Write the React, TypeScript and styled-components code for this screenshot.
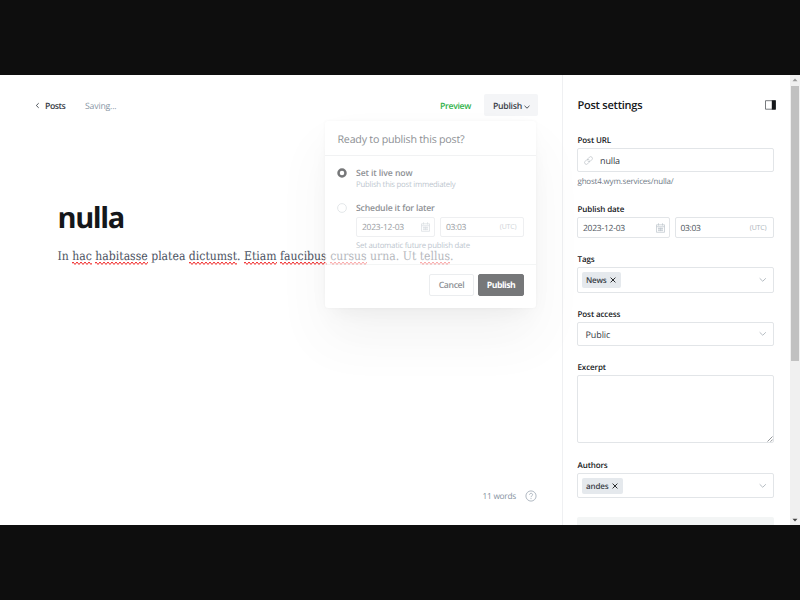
import React from 'react';
import styled, { createGlobalStyle } from 'styled-components';

const Global = createGlobalStyle`
  * { box-sizing: border-box; }
  body {
    margin: 0;
    background: #0e0e0e;
    font-family: "Open Sans", "Noto Sans", sans-serif;
    text-rendering: geometricPrecision;
  }
`;

const Frame = styled.div`
  width: 800px;
  height: 600px;
  padding: 75px 0;
  overflow: hidden;
  background: #0e0e0e;
`;

const Screen = styled.div`
  display: grid;
  grid-template-columns: 562px 228px 10px;
  height: 450px;
  background: #fff;
  overflow: hidden;
`;

const Label = styled.span<{ $size?: number; $weight?: number; $track?: number; $color?: string }>`
  padding-top: 1px;
  font-size: ${p => p.$size ?? 8.7}px;
  font-weight: ${p => p.$weight ?? 400};
  letter-spacing: ${p => p.$track ?? 0}px;
  color: ${p => p.$color ?? '#15171a'};
  white-space: nowrap;
`;

/* Editor column */

const Editor = styled.main`
  position: relative;
  display: flex;
  flex-direction: column;
  height: 450px;
`;

const Toolbar = styled.header`
  display: flex;
  align-items: center;
  height: 22px;
  margin: 19px 24px 0 35px;
`;

const BackLink = styled.div`
  display: flex;
  align-items: center;
  gap: 5px;
  width: 50px;
`;

const ToolbarActions = styled.div`
  display: flex;
  align-items: center;
  gap: 13px;
  margin-left: auto;
`;

const MenuButton = styled.div`
  display: flex;
  align-items: center;
  justify-content: center;
  gap: 2px;
  width: 54px;
  height: 22px;
  padding-left: 1px;
  border-radius: 2px;
  background: #f4f5f7;

  svg { margin-top: 3px; }
`;

const PostTitle = styled.h1`
  margin: 82px 0 0 57.5px;
  font-size: 29px;
  line-height: 40px;
  font-weight: 700;
  letter-spacing: -1.4px;
  color: #15171a;
`;

const PostBody = styled.p`
  margin: 8px 0 0 57.5px;
  font-family: "DejaVu Serif Condensed", "DejaVu Serif", serif;
  font-size: 12.1px;
  line-height: 20px;
  white-space: nowrap;
  color: #4a5160;
`;

const Misspelt = styled.span`
  padding-bottom: 2px;
  background: url("data:image/svg+xml,%3Csvg xmlns='http://www.w3.org/2000/svg' width='4' height='4'%3E%3Cpath d='M-1 3.500 1 1 3 3.500 5 1' fill='none' stroke='%23f02828' stroke-width='1'/%3E%3C/svg%3E")
    left bottom repeat-x;
`;

const StatusBar = styled.footer`
  display: flex;
  align-items: center;
  justify-content: flex-end;
  gap: 9px;
  height: 14px;
  margin: auto 25px 22.5px 0;
`;

/* Publish menu */

const PublishMenu = styled.section`
  position: absolute;
  top: 45.5px;
  left: 325px;
  width: 211px;
  height: 187.5px;
  border-radius: 3px;
  background: #fff;
  opacity: 0.58;
  box-shadow: 0 0 3px rgba(0, 0, 0, 0.06), 0 30px 50px -2px rgba(0, 0, 0, 0.08), 0 8px 20px -8px rgba(0, 0, 0, 0.1);
`;

const MenuHeader = styled.div`
  display: flex;
  align-items: center;
  height: 35.5px;
  padding: 4px 12px 0 12.5px;
  border-bottom: 1px solid #e8eaec;
`;

const MenuBody = styled.div`
  display: flex;
  flex-direction: column;
  gap: 10px;
  height: 108px;
  padding: 10.5px 12px 0;
`;

const Option = styled.div`
  display: grid;
  grid-template-columns: 10px 1fr;
  column-gap: 9px;
  align-items: start;
`;

const OptionText = styled.div`
  display: flex;
  flex-direction: column;
  line-height: 11.5px;
`;

const MenuDates = styled.div`
  display: grid;
  grid-template-columns: 79px 84px;
  gap: 5px;
  margin: 3px 0 3px;
`;

const MenuFooter = styled.div`
  display: flex;
  justify-content: flex-end;
  gap: 4px;
  height: 43px;
  padding: 9px 12px 0 0;
  border-top: 1px solid #eceeef;
`;

const DialogButton = styled.div<{ $primary?: boolean; $width: number }>`
  display: flex;
  align-items: center;
  justify-content: center;
  width: ${p => p.$width}px;
  height: 21.5px;
  border-radius: 2px;
  border: 1px solid ${p => (p.$primary ? '#15171a' : '#dde1e5')};
  background: ${p => (p.$primary ? '#15171a' : '#fff')};
`;

/* Settings column */

const Settings = styled.aside`
  height: 450px;
  overflow: hidden;
  padding: 0 16px 0 14px;
  border-left: 1px solid #eff0f2;
`;

const SettingsHeader = styled.div`
  display: flex;
  align-items: center;
  justify-content: space-between;
  height: 22px;
  margin: 19px -2px 18px 0.5px;
`;

const Field = styled.div<{ $after: number }>`
  display: flex;
  flex-direction: column;
  margin-bottom: ${p => p.$after}px;
`;

const FieldLabel = styled(Label)`
  height: 11px;
  line-height: 11px;
  margin: 0 0 3px 0.5px;
`;

const Box = styled.div<{ $height: number; $pad?: number; $end?: number }>`
  display: flex;
  align-items: center;
  justify-content: space-between;
  height: ${p => p.$height}px;
  padding: 0 ${p => p.$end ?? 6.5}px 0 ${p => p.$pad ?? 5}px;
  border: 1px solid #e2e5e8;
  border-radius: 2px;
`;

const Inline = styled.div<{ $gap: number }>`
  display: flex;
  align-items: center;
  gap: ${p => p.$gap}px;
`;

const Dates = styled.div`
  display: grid;
  grid-template-columns: 93px 1fr;
  gap: 5px;
`;

const Hint = styled(Label)`
  height: 12px;
  line-height: 12px;
  margin: 3px 0 0 0.5px;
`;

const Chip = styled.div`
  display: flex;
  align-items: center;
  gap: 3.500px;
  height: 16px;
  padding: 0 5px 0 4px;
  border-radius: 2px;
  background: #e5e9ed;
`;

const ExcerptBox = styled.div`
  display: flex;
  align-items: flex-end;
  justify-content: flex-end;
  height: 68px;
  padding: 0.5px;
  border: 1px solid #e2e5e8;
  border-radius: 2px;
`;

const NextButton = styled.div`
  height: 30px;
  border-radius: 2px;
  background: #f3f5f5;
`;

/* Scrollbar */

const Scrollbar = styled.div`
  display: flex;
  flex-direction: column;
  justify-content: space-between;
  align-items: center;
  height: 450px;
  background: #f0f0f0;
`;

const Thumb = styled.div`
  width: 8px;
  height: 275px;
  margin-bottom: auto;
  background: #c1c1c1;
`;

const ArrowSlot = styled.div`
  display: flex;
  align-items: center;
  justify-content: center;
  height: 10.5px;
`;

const Chevron = ({ color = '#b0b7be', size = 7.5 }: { color?: string; size?: number }) => (
  <svg width={size} height={size} viewBox="0 0 8 8" fill="none" stroke={color} strokeWidth={size < 7 ? 1.2 : 1}>
    <path d="M.7 2.4 4 5.600 7.300 2.4" />
  </svg>
);

const Cross = () => (
  <svg width="6" height="6" viewBox="0 0 6 6" stroke="#15171a" strokeWidth="0.9">
    <path d="M.6.6 5.4 5.4M5.4.6.6 5.4" />
  </svg>
);

const Radio = ({ on = false }: { on?: boolean }) => (
  <svg width="10" height="11" viewBox="0 0 10 11" fill="#fff">
    {on ? (
      <circle cx="5" cy="6" r="3.500" stroke="#15171a" strokeWidth="2.500" />
    ) : (
      <circle cx="5" cy="6" r="4.400" stroke="#ccd2d7" strokeWidth="0.9" />
    )}
  </svg>
);

const CalendarIcon = () => (
  <svg width="9" height="10" viewBox="0 0 9 10" fill="none" stroke="#bcc4cc" strokeWidth="0.7">
    <path d="M.5 1.8h8v7.5h-8zM.5 3.7h8M2.5.3v2.2M6.5.3v2.2M1.9 5.4h5.2M1.9 7.3h5.2M3 4.6v3.6M4.5 4.6v3.6M6 4.6v3.6" />
  </svg>
);

const LinkIcon = () => (
  <svg width="9" height="9" viewBox="0 0 24 24" fill="none" stroke="#b8bec4" strokeWidth="1.8" strokeLinecap="round">
    <path d="M10 13.5a5 5 0 0 0 7.1.2l4-4a4.6 4.6 0 0 0-6.600-6.600l-4 4a5 5 0 0 0-1 1.500" />
    <path d="M14 10.500a5 5 0 0 0-7.100-.2l-4 4a4.600 4.600 0 0 0 6.600 6.600l4-4a5 5 0 0 0 1-1.500" />
  </svg>
);

const DateValue = () => (
  <>
    <Label $size={8.5} $track={-0.24} $color="#4a5159">2023-12-03</Label>
    <CalendarIcon />
  </>
);

const TimeValue = () => (
  <>
    <Label $size={8.5} $track={-0.3} $color="#4a5159">03:03</Label>
    <Label $size={7} $track={-0.15} $color="#adb4bb">(UTC)</Label>
  </>
);

const fieldText = { $size: 8, $weight: 600, $track: -0.1 };

export default function App() {
  return (
    <Frame>
      <Global />
      <Screen>
        <Editor>
          <Toolbar>
            <BackLink>
              <svg width="5" height="7" viewBox="0 0 5 7" fill="none" stroke="#394047" strokeWidth="0.9">
                <path d="M3.700 1.200 1.300 3.500 3.700 5.800" />
              </svg>
              <Label $weight={600} $track={-0.45} $color="#394047">Posts</Label>
            </BackLink>
            <Label $track={-0.18} $color="#8795a4">Saving...</Label>
            <ToolbarActions>
              <Label $weight={600} $track={-0.33} $color="#30b24a">Preview</Label>
              <MenuButton>
                <Label $weight={600} $track={-0.27} $color="#394047">Publish</Label>
                <Chevron color="#394047" size={6} />
              </MenuButton>
            </ToolbarActions>
          </Toolbar>
          <PostTitle>nulla</PostTitle>
          <PostBody>
            In <Misspelt>hac</Misspelt> <Misspelt>habitasse</Misspelt> platea <Misspelt>dictumst</Misspelt>.{' '}
            <Misspelt>Etiam</Misspelt> <Misspelt>faucibus</Misspelt> <Misspelt>cursus</Misspelt> urna. Ut{' '}
            <Misspelt>tellus</Misspelt>.
          </PostBody>
          <StatusBar>
            <Label $size={8.3} $track={-0.25} $color="#8592a0">11 words</Label>
            <svg width="12" height="12" viewBox="0 0 12 12" fill="none" stroke="#9da7b3" strokeWidth="0.8">
              <circle cx="6" cy="6" r="5.100" />
              <path d="M4.500 4.800c0-2 3.100-2 3.100-.1 0 1.200-1.600 1.100-1.600 2.500M6 8.100v1" />
            </svg>
          </StatusBar>
          <PublishMenu>
            <MenuHeader>
              <Label $size={10.7} $track={-0.23} $color="#394047">Ready to publish this post?</Label>
            </MenuHeader>
            <MenuBody>
              <Option>
                <Radio on />
                <OptionText>
                  <Label $weight={600} $track={-0.12} $color="#394047">Set it live now</Label>
                  <Label $size={7.8} $track={-0.26} $color="#8e9cac">Publish this post immediately</Label>
                </OptionText>
              </Option>
              <Option>
                <Radio />
                <OptionText>
                  <Label $weight={600} $track={-0.18} $color="#394047">Schedule it for later</Label>
                  <MenuDates>
                    <Box $height={20} $end={4}><DateValue /></Box>
                    <Box $height={20}><TimeValue /></Box>
                  </MenuDates>
                  <Label $size={7.8} $track={-0.24} $color="#8e9cac">Set automatic future publish date</Label>
                </OptionText>
              </Option>
            </MenuBody>
            <MenuFooter>
              <DialogButton $width={45}>
                <Label $weight={600} $track={-0.38} $color="#394047">Cancel</Label>
              </DialogButton>
              <DialogButton $width={46} $primary>
                <Label $weight={700} $track={-0.48} $color="#fff">Publish</Label>
              </DialogButton>
            </MenuFooter>
          </PublishMenu>
        </Editor>

        <Settings>
          <SettingsHeader>
            <Label $size={11} $weight={600} $track={-0.24}>Post settings</Label>
            <svg width="11" height="10" viewBox="0 0 11 10">
              <path d="M.5.700h9.800v8.500H.5z" fill="#fff" stroke="#55595d" strokeWidth="0.8" />
              <path d="M6.800.300h4v9.300h-4z" fill="#15171a" />
            </svg>
          </SettingsHeader>
          <Field $after={16}>
            <FieldLabel {...fieldText}>Post URL</FieldLabel>
            <Box $height={24} $pad={5.5}>
              <Inline $gap={7.5}>
                <LinkIcon />
                <Label $size={9} $track={-0.12} $color="#394047">nulla</Label>
              </Inline>
            </Box>
            <Hint $size={8} $track={-0.19} $color="#6f7a86">ghost4.wym.services/nulla/</Hint>
          </Field>
          <Field $after={14.5}>
            <FieldLabel {...fieldText}>Publish date</FieldLabel>
            <Dates>
              <Box $height={21} $end={4}><DateValue /></Box>
              <Box $height={21} $pad={4.500}><TimeValue /></Box>
            </Dates>
          </Field>
          <Field $after={15}>
            <FieldLabel {...fieldText}>Tags</FieldLabel>
            <Box $height={26} $pad={4}>
              <Chip>
                <Label $size={8} $weight={600} $track={-0.2} $color="#394047">News</Label>
                <Cross />
              </Chip>
              <Chevron />
            </Box>
          </Field>
          <Field $after={15.5}>
            <FieldLabel {...fieldText}>Post access</FieldLabel>
            <Box $height={24} $pad={7.500}>
              <Label $size={9} $track={-0.1} $color="#394047">Public</Label>
              <Chevron />
            </Box>
          </Field>
          <Field $after={16}>
            <FieldLabel {...fieldText}>Excerpt</FieldLabel>
            <ExcerptBox>
              <svg width="6" height="6" viewBox="0 0 6 6" stroke="#62666a" strokeWidth="0.7">
                <path d="M.5 5.500 5.500.5M3.500 5.700 5.700 3.500" />
              </svg>
            </ExcerptBox>
          </Field>
          <Field $after={19}>
            <FieldLabel {...fieldText}>Authors</FieldLabel>
            <Box $height={25} $pad={4}>
              <Chip>
                <Label $size={8} $weight={600} $track={-0.15} $color="#394047">andes</Label>
                <Cross />
              </Chip>
              <Chevron />
            </Box>
          </Field>
          <NextButton />
        </Settings>

        <Scrollbar>
          <ArrowSlot>
            <svg width="6" height="4" viewBox="0 0 6 4"><path d="M.5 3.300 3 .6 5.500 3.300z" fill="#999" /></svg>
          </ArrowSlot>
          <Thumb />
          <ArrowSlot>
            <svg width="6" height="4" viewBox="0 0 6 4"><path d="M.5.700 3 3.400 5.500.700z" fill="#444" /></svg>
          </ArrowSlot>
        </Scrollbar>
      </Screen>
    </Frame>
  );
}
